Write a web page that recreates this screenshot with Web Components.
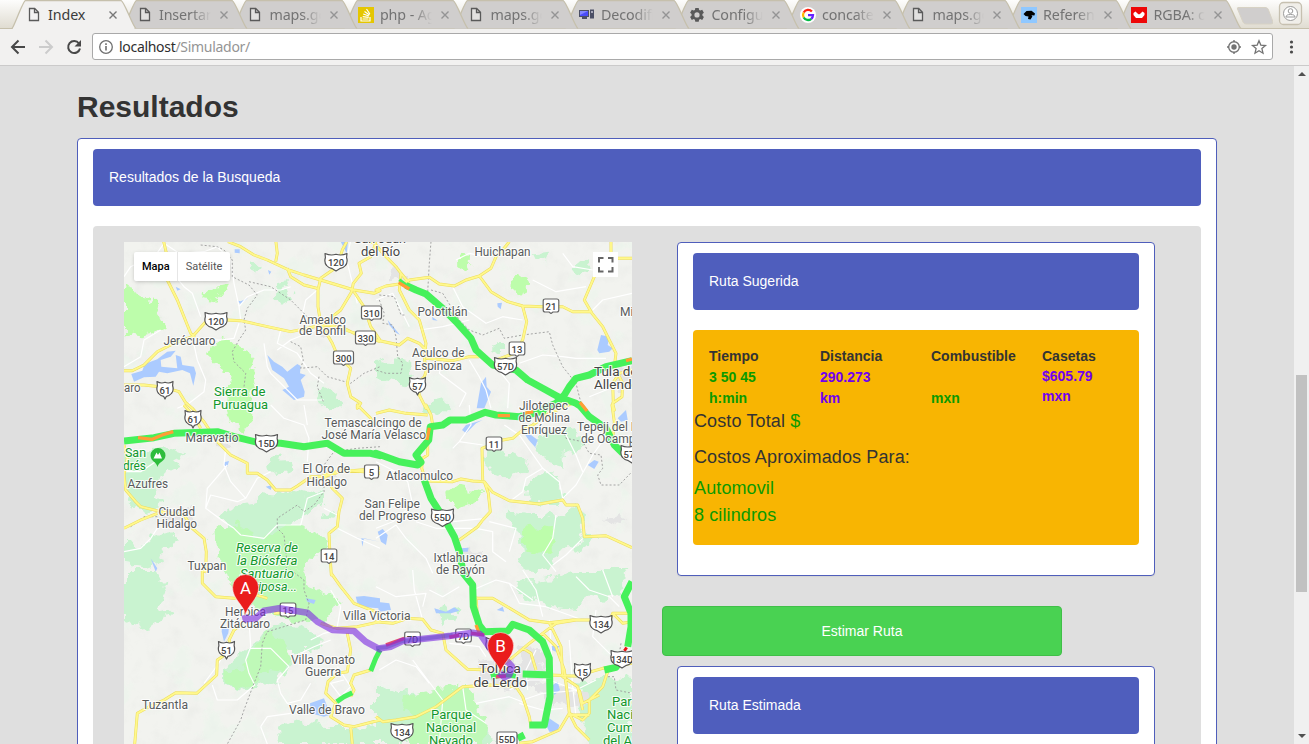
<!DOCTYPE html>
<html lang="es">
<head>
<meta charset="utf-8">
<title>Index</title>
<style>
html,body{margin:0;height:100%;overflow:hidden}
body{font-family:"Liberation Sans",Arial,sans-serif;font-size:14px;line-height:20px;color:#333;background:#dfdfdf}
</style>
</head>
<body>
<browser-window>
  <browser-tab slot="tabs" icon="page" active>Index</browser-tab>
  <browser-tab slot="tabs" icon="page">Insertar</browser-tab>
  <browser-tab slot="tabs" icon="page">maps.go</browser-tab>
  <browser-tab slot="tabs" icon="stack">php - Agr</browser-tab>
  <browser-tab slot="tabs" icon="page">maps.go</browser-tab>
  <browser-tab slot="tabs" icon="pc">Decodifi</browser-tab>
  <browser-tab slot="tabs" icon="gear">Configur</browser-tab>
  <browser-tab slot="tabs" icon="google">concaten</browser-tab>
  <browser-tab slot="tabs" icon="page">maps.go</browser-tab>
  <browser-tab slot="tabs" icon="bird">Referenc</browser-tab>
  <browser-tab slot="tabs" icon="wing">RGBA: co</browser-tab>
  <results-page></results-page>
</browser-window>

<script>
const define = (name, html, setup) => customElements.define(name, class extends HTMLElement {
  connectedCallback() {
    if (this.shadowRoot) return;
    const t = document.createElement('template');
    t.innerHTML = typeof html === 'function' ? html(this) : html;
    this.attachShadow({mode: 'open'}).appendChild(t.content.cloneNode(true));
    if (setup) setup(this, this.shadowRoot);
  }
});

/* ---------- tabs ---------- */
const ICONS = {
  page: '<path d="M3.5 1.5h5.2l3.8 3.8v8.2h-9zM8.5 1.5v4h4" fill="#f4f4f4" fill-opacity=".5" stroke="#5a5a5a" stroke-width="1.3"/>',
  stack: '<path fill="#e5c600" d="M0 0h16v16H0z"/><path d="M3 10v4h9v-4M4.5 12h6M4.7 9.6l6 .8M5.2 7l5.7 2M6.5 4.4l5 3.6M8.5 2l3.4 5" stroke="#fff" stroke-width="1.2" fill="none"/>',
  pc: '<path fill="#4b4f66" d="M0 3h10v7H0zM3 10h5v2H3zM11 2.500h4v9h-4z"/><path fill="#4a4cf8" d="M1 4h8v5H1z"/><path fill="#8286ff" d="M1 4h8L1 8z"/><path fill="#aab" d="M12 4h2v2h-2z"/>',
  gear: '<path fill="#595959" fill-rule="evenodd" d="M6.300 1h3.400l.4 2 1.200.6 1.900-.8 1.700 2.900-1.500 1.400v1.500l1.500 1.400-1.700 2.900-1.900-.8-1.200.6-.4 2H6.300l-.4-2-1.200-.6-1.900.8L1.100 10l1.500-1.400V7.100L1.100 5.700l1.700-2.900 1.900.8L5.900 3zM8 5.300a2.600 2.600 0 1 0 0 5.200 2.600 2.600 0 0 0 0-5.200z"/>',
  google: '<circle cx="8" cy="8" r="8" fill="#fff"/><g fill="none" stroke-width="2.300"><path d="M11.900 4.600A5 5 0 0 0 3.700 5.500" stroke="#f21"/><path d="M3.700 5.500a5 5 0 0 0 0 5" stroke="#fb0"/><path d="M3.700 10.500a5 5 0 0 0 7.600 1.300" stroke="#0b4"/><path d="M11.300 11.800A5 5 0 0 0 13 8.200H8" stroke="#62f"/></g>',
  bird: '<path fill="#90c8ff" d="M0 0h16v16H0z"/><path d="M2.500 7l3-3 5-.2 3.500 2.700-.6 2-3-.3 1 1.300L9.500 12.500 7 12l.5-2.500-3-.5z"/>',
  wing: '<path fill="#ee0808" d="M0 0h16v16H0z"/><path fill="#fff" d="M2.500 6l2-1.500L6.500 6.500 8 7.500l1.500-1L11.500 4.500l2 1.500v2L11 11H5L2.500 8z"/>'
};
define('browser-tab', el => `
<style>
:host{display:block;position:relative;flex:0 0 110.500px;height:29px}
.shape{position:absolute;left:0;top:0;overflow:visible}
.row{position:relative;display:flex;align-items:center;height:29px;padding-left:${el.hasAttribute('active') ? '14px' : '14.400px'};width:92px}
.icon{flex:0 0 16px}
.t{flex:0 0 53px;margin-left:6px;font:14.300px/29px "Noto Sans","Open Sans",sans-serif;letter-spacing:-.1px;color:${el.hasAttribute('active') ? '#3c3c3c' : '#737373'};overflow:hidden;white-space:nowrap;
${el.hasAttribute('active') ? '' : '-webkit-mask-image:linear-gradient(90deg,#000 62%,transparent 98%)'}}
.x{margin-left:7px;flex:0 0 10px}
</style>
<svg class="shape" width="124" height="29"><path d="M0 28.500C2 27 11 .5 13.500.5H109C112 .5 121 27 124 28.500" fill="${el.hasAttribute('active') ? '#f2f1f0' : '#d0cecd'}" stroke="#c6c0ac" stroke-width="1.300"/>${el.hasAttribute('active') ? '<path d="M1 28.500h121" stroke="#f2f1f0" stroke-width="1.500"/>' : ''}</svg>
<div class="row"><svg class="icon" width="16" height="16" viewBox="0 0 16 16">${ICONS[el.getAttribute('icon')]}</svg>
<span class="t"><slot></slot></span>
<svg class="x" width="10" height="10"><path d="M1.500 1.500l7 7m0-7l-7 7" stroke="${el.hasAttribute('active') ? '#777' : '#949494'}" stroke-width="1.400"/></svg></div>`,
el => { el.style.zIndex = 20 - [...el.parentNode.children].indexOf(el); });

/* ---------- address bar ---------- */
define('address-bar', `
<style>
:host{display:flex;align-items:center;height:36px;background:#f2f1f0;border-bottom:1px solid #cbcaca;box-sizing:content-box}
.nav{flex:0 0 92px;height:36px}
.box{flex:0 0 1179px;height:25px;border:1px solid #a9a9a9;border-radius:3px;background:#fff;display:flex;align-items:center;margin-top:-1px}
.url{font:14px/25px "Noto Sans","Open Sans",sans-serif;color:#2e2e2e;letter-spacing:-.3px;margin-left:5px;flex:1}
.url span{color:#959595}
.info{margin-left:5px}
</style>
<svg class="nav" viewBox="0 0 92 36" fill="none" stroke-width="2">
<path d="M25 18H12.500M18.500 11.500L12 18l6.500 6.500" stroke="#484848"/>
<path d="M39 18h12.500M45.500 11.500L52 18l-6.500 6.500" stroke="#ccc"/>
<path d="M79 14.500A6 6 0 1 0 80 19.500" stroke="#484848"/><path d="M81 11v6.500h-6.500z" fill="#484848"/></svg>
<div class="box"><svg class="info" width="16" height="16" fill="none" stroke="#6f6f6f"><circle cx="8" cy="8" r="6.300" stroke-width="1.300"/><path d="M8 7v4.500M8 4.300v1.600" stroke-width="1.600"/></svg>
<span class="url">localhost<span>/Simulador/</span></span>
<svg width="47" height="20" fill="none" stroke="#737373"><circle cx="9" cy="10" r="5.300" stroke-width="1.400"/><circle cx="9" cy="10" r="2.700" fill="#737373" stroke="none"/><path d="M9 3v2M9 15v2M2 10h2M14 10h2" stroke-width="1.400"/><path d="M34 3.800l1.800 4.300 4.700.4-3.600 3.100 1.100 4.600-4-2.500-4 2.500 1.100-4.600-3.600-3.100 4.700-.4z" stroke-width="1.300"/></svg></div>
<svg width="36" height="36" fill="#4a4a4a"><circle cx="18.500" cy="13" r="1.600"/><circle cx="18.500" cy="18" r="1.600"/><circle cx="18.500" cy="23" r="1.600"/></svg>`);

define('page-scrollbar', `
<style>
:host{display:flex;flex-direction:column;align-items:center;background:#f0f0f0;width:15px}
.track{flex:1;width:11px;padding-top:294px;box-sizing:border-box}
.thumb{height:217px;background:#c1c1c1}
svg{display:block}
</style>
<svg width="15" height="15"><path d="M4 10h8L8 6z" fill="#505050"/></svg>
<div class="track"><div class="thumb"></div></div>
<svg width="15" height="15"><path d="M4 5h8L8 9z" fill="#505050"/></svg>`);

define('browser-window', `
<style>
:host{display:flex;flex-direction:column;width:1309px;height:744px;overflow:hidden}
.strip{display:flex;flex:0 0 29px;height:29px;padding-left:12px;background:linear-gradient(#fdfdfc,#dfdbd0);box-shadow:inset 0 -1px #c6c0ac;position:relative;box-sizing:border-box}
.new{margin-left:8px;flex:0 0 37px}
.user{margin-left:3px}
.view{flex:1;display:flex;min-height:0}
.page{flex:0 0 1294px;height:678px;overflow:hidden}
address-bar{flex:0 0 36px}
</style>
<div class="strip"><slot name="tabs"></slot>
<svg class="new" width="37" height="29"><path d="M2 7.500h27c2 0 3 1 3.500 2.500L37 22q.5 2-2 2H10q-2 0-3-2L1.500 9q-.4-1.500.5-1.500z" fill="#d0cecd" stroke="#d7d2c4" /></svg>
<svg class="user" width="28" height="29" fill="none"><rect x="3.500" y="2.500" width="22" height="22" rx="4" fill="#f0eee9" stroke="#c6c0b0" stroke-width="1.300"/><circle cx="14.500" cy="13.500" r="7" fill="#fff" stroke="#999"/><circle cx="14.500" cy="11" r="2.300" stroke="#999"/><path d="M10 17q0-2.500 4.500-2.500t4.500 2.500z" stroke="#999"/></svg></div>
<address-bar></address-bar>
<div class="view"><div class="page"><slot></slot></div><page-scrollbar></page-scrollbar></div>`);

/* ---------- page widgets ---------- */
define('result-panel', `
<style>
:host{display:block;box-sizing:border-box;background:#fff;border:1px solid #4f5ebb;border-radius:4px;padding:10px 15px 0;box-shadow:0 1px 1px rgba(0,0,0,.05)}
</style><slot></slot>`);
define('panel-title', `
<style>
:host{display:block;box-sizing:border-box;height:57px;padding:18px 16px 19px;background:#4f5ebd;border-radius:4px;color:#fff;margin-bottom:20px}
</style><slot></slot>`);
define('trip-metric', `
<style>
:host{display:block;flex:0 0 111px;font-weight:bold}
:host([tight]){flex:0 1 97px;min-width:0}
.v,.u{height:var(--row,21px);line-height:22px;color:var(--tone,#0a9a00)}
:host([tight]) .v,:host([tight]) .u{line-height:20px}
</style><div><slot></slot></div><div class="v"><slot name="v"></slot></div><div class="u"><slot name="u"></slot></div>`);
define('cost-box', `
<style>
:host{display:block;box-sizing:border-box;height:215px;background:#f8b502;border-radius:4px;padding-top:16px}
.m{display:flex;padding-left:16px;height:65px}
.violet{--tone:#7000f0}
[tight]{--row:20px}
p{margin:0 0 0 1px;font-size:18px;line-height:20px;letter-spacing:.12px}
.g{color:#0a9a00}
</style>
<div class="m">
<trip-metric>Tiempo<span slot="v">3 50 45</span><span slot="u">h:min</span></trip-metric>
<trip-metric class="violet">Distancia<span slot="v">290.273</span><span slot="u">km</span></trip-metric>
<trip-metric>Combustible<span slot="u">mxn</span></trip-metric>
<trip-metric class="violet" tight>Casetas<span slot="v">$605.79</span><span slot="u">mxn</span></trip-metric>
</div>
<p>Costo Total <span class="g">$</span></p>
<p style="margin-top:16px">Costos Aproximados Para:</p>
<p class="g" style="margin-top:11px">Automovil</p>
<p class="g" style="margin-top:7px">8 cilindros</p>`);
define('action-button', `
<style>
:host{display:block}
button{display:block;box-sizing:border-box;width:100%;height:50px;border:1px solid #40bf48;border-radius:4px;background:#49d252;color:#fff;font:14px/20px "Liberation Sans",Arial,sans-serif;padding:0}
</style><button><slot></slot></button>`);
define('results-page', `
<style>
:host{display:block;height:678px;background:#dfdfdf;padding:24px 77px 0;box-sizing:border-box}
h1{margin:0 0 15px;font-size:30px;line-height:33px;height:33px;font-weight:bold}
.main{height:900px;width:1140px}
.well{display:flex;align-items:flex-start;height:800px;background:#dfdfdf;border-radius:4px;padding:16px 0 0 31px}
route-map{flex:0 0 508px}
.side{flex:0 0 493px;min-width:0;margin-left:30px}
.side result-panel{margin-left:15px;height:334px}
action-button{width:400px;margin:30px 0 10px}
</style>
<h1>Resultados</h1>
<result-panel class="main">
<panel-title>Resultados de la Busqueda</panel-title>
<div class="well"><route-map></route-map>
<div class="side">
<result-panel><panel-title>Ruta Sugerida</panel-title><cost-box></cost-box></result-panel>
<action-button>Estimar Ruta</action-button>
<result-panel><panel-title>Ruta Estimada</panel-title></result-panel>
</div></div>
</result-panel>`);

/* ---------- map ---------- */
/* Geometry is stored per sheet in thirds of a pixel; each sheet has its own origin. */
const SHEETS = {a:[124,240], b:[376,240], c:[124,405], d:[376,405], e:[124,570], f:[376,570]};
const pts = (s, str) => str.trim().split(/\s+/).map(p => {
  const [x, y] = p.split(',').map(Number), o = SHEETS[s];
  return (o[0] + x / 3).toFixed(1) + ' ' + (o[1] + y / 3).toFixed(1);
});
const path = rows => rows.map(r => {
  let d = [];
  for (let i = 0; i < r.length; i += 2) d = d.concat(pts(r[i], r[i + 1]));
  return 'M' + d.join('L');
}).join('');

const PARK_BRIGHT = [
 ['a','0,140 28,148 35,165 62,172 72,185 90,172 115,190 112,215 105,232 123,262 80,280 48,286 0,275'],
 ['a','252,160 270,145 305,137 300,158 280,182 248,178'],
 ['a','252,345 262,318 290,305 320,303 340,325 380,345 393,365 385,400 392,450 380,505 385,540 355,585 325,550 310,510 312,440 320,410 290,385 270,365'],
 ['b','245,55 262,42 285,45 284,78 265,88 247,75'],
 ['b','408,120 440,110 462,125 455,152 428,163 406,148'],
 ['d','220,260 235,243 270,252 318,262 312,280 285,300 250,307 222,290'],
 ['d','440,380 470,362 533,372 530,400 530,440 490,448 442,440'],
 ['c','265,370 340,355 400,400 500,360 560,380 612,400 600,430 550,470 520,505 520,560 330,560 300,480 270,430'],
 ['e','350,0 520,0 550,50 650,90 600,150 520,155 400,120 360,60'],
 ['e','430,180 500,240 480,305 430,300 380,355 310,340 305,310 360,290 380,240'],
 ['f','105,370 180,355 270,345 290,370 300,425 330,450 320,522 100,522 90,480 110,440 80,400']
];
const PARKS = [
 ['c','0,135 60,140 150,130 180,150 150,165 170,185 110,215 90,270 120,300 60,320 20,300 0,240'],
 ['c','425,190 460,150 480,148 470,170 510,168 515,185 490,205 450,208'],
 ['c','300,330 340,300 400,290 420,265 480,270 520,255 570,270 600,250 600,290 560,320 520,340 500,380 540,440 500,500 340,480 340,400 300,370'],
 ['c','610,310 640,325 630,342 600,335'],
 ['c','0,410 60,420 110,380 165,395 140,430 110,440 120,470 60,490 0,480'],
 ['b','0,370 50,355 105,370 110,410 80,440 60,430 0,420'],
 ['b','355,310 375,300 375,335 355,345'],['b','150,490 200,478 225,500 190,530 140,520'],
 ['b','600,65 640,55 640,90 615,105 595,88'],['b','470,40 530,35 520,55 480,60'],
 ['a','460,125 495,120 480,150 505,165 500,185 480,190 455,180'],
 ['a','575,450 600,440 640,470 655,505 620,505 585,490'],
 ['a','385,70 405,75 400,92 385,85'],
 ['d','320,150 380,135 430,160 458,175 445,200 400,220 350,200 330,180'],
 ['d','450,235 500,200 550,215 555,245 570,275 540,290 480,295 448,275'],
 ['d','500,90 570,60 610,90 640,120 600,135 560,150 560,185 510,170 490,130'],
 ['d','395,320 450,330 500,330 560,340 610,300 620,370 600,430 560,430 530,480 490,500 440,500 430,390 400,340'],
 ['d','620,385 670,400 640,420 600,440'],
 ['e','0,0 90,0 130,40 100,100 140,130 90,160 50,170 0,150'],
 ['e','300,300 380,230 420,180 500,165 570,190 600,210 570,240 490,240 500,290 440,340 370,360 300,340'],
 ['e','460,480 520,450 620,480 680,480 768,455 768,522 470,522'],
 ['f','0,340 60,370 110,365 120,440 80,480 90,522 0,522'],
 ['f','430,30 540,20 600,0 760,0 740,60 680,90 620,75 600,120 520,110 420,70'],
 ['f','170,125 210,105 250,130 240,155 190,155'],
 ['f','610,350 680,320 768,330 768,522 640,522 615,430'],
 ['f','280,480 320,470 350,500 360,522 270,522']
];
const WATER = [
 ['a','22,402 55,392 62,372 100,358 130,335 155,332 140,350 110,360 112,380 160,385 155,345 170,350 175,375 210,380 216,400 208,437 198,400 175,390 130,400 105,395 95,410 60,412 30,425'],
 ['a','430,345 450,365 475,380 490,395 520,372 530,378 528,400 545,405 530,420 542,455 540,470 510,480 475,450 495,440 480,415 445,390'],
 ['a','342,182 350,184 372,174 348,192'],['a','332,28 347,28 347,40 332,38'],['a','650,5 672,5 668,40'],['a','155,140 170,148 160,152'],['a','432,90 442,95 436,104'],
 ['b','35,240 72,285 60,278 40,255'],['b','664,330 675,285 700,290 695,315 710,325 700,335 670,340'],
 ['b','302,505 315,430 330,410 332,440 345,455 325,505'],['b','364,190 378,188 374,208 365,200'],['b','168,230 185,242 170,240'],
 ['d','258,75 270,60 320,45 300,55 280,75 270,85'],['d','448,90 458,105 485,135 478,125 485,105 465,90'],['d','635,180 655,165 668,170 655,192'],['d','5,380 20,372 35,390 30,420 15,410'],['d','725,40 750,15 755,45 735,50'],['d','255,430 278,428 275,440 258,440'],
 ['c','300,172 315,168 310,185 300,182'],['c','425,245 445,240 440,255'],['c','80,460 100,490 95,500'],['c','690,395 768,410 720,400 715,425 712,400'],
 ['e','294,170 315,172 313,190 300,215 293,185'],['e','695,80 720,78 768,85 768,115 720,112 700,98'],['e','545,85 575,90 570,102 550,95'],['e','558,400 600,385 610,410 630,430 600,440 560,430'],
 ['f','175,115 210,125 235,112 250,122 225,130 180,130'],['f','0,95 40,100 45,120 10,125'],['f','525,228 550,228 540,245 528,240'],['f','530,345 545,335 552,360 535,375'],['f','510,465 520,445 535,455 550,465 545,485 520,485'],['f','362,120 380,110 385,125']
];
const URBAN = [
 ['f','300,265 380,255 410,270 470,260 510,300 470,350 380,360 320,330'],['f','430,230 500,235 520,290 440,290'],['f','470,330 560,350 640,380 620,410 520,400'],
 ['c','580,195 640,205 620,230 590,225'],['c','95,315 200,315 215,360 150,365'],['b','60,80 90,100 80,130 50,120'],['c','280,110 325,110 325,130 290,128'],
 ['d','690,345 730,325 750,335 720,360 700,355'],['b','700,380 768,380 768,450 720,450'],['d','260,430 330,435 330,460 270,455'],['a','560,250 620,245 615,280 570,280']
];
const MINOR = [
 ['a','0,110 20,80 60,60 95,45 120,10'],['a','120,10 165,40 240,35 280,20'],['a','280,20 320,60 330,130 345,200 350,240'],['a','155,110 180,140 205,160 230,230'],
 ['a','345,200 370,170 420,150 470,150 500,140'],['a','205,290 220,360 245,420 240,455 195,490 160,505'],['a','345,250 330,295 290,300 215,300'],['a','0,380 50,350 60,300 110,270'],
 ['a','420,310 430,380 440,400 480,440 520,480 600,480'],['a','460,330 500,300 600,260'],['a','470,270 460,310 520,340 560,400 600,430'],
 ['a','680,0 668,60 690,150 700,190'],['a','530,250 545,180 580,150'],['b','230,140 260,200 330,250 380,230 440,240'],['b','130,270 200,260 280,240'],['b','470,120 540,155 630,140'],
 ['b','200,360 190,400 270,460 250,500'],['b','280,360 310,410 330,450 345,505'],['b','430,370 500,345 560,350 600,355 690,355'],['b','360,380 400,430 395,505'],['b','560,40 590,80 650,90'],['b','650,210 680,180 768,160'],
 ['b','0,180 50,160 75,210 100,260'],['b','640,470 690,450 720,420'],['b','330,50 280,40 240,60'],
 ['c','305,130 300,180 320,230 365,280 340,290 260,270 245,310 300,350 330,370 350,390'],['c','365,280 400,220 440,200'],['c','440,0 480,40 540,60 555,100 550,170'],
 ['c','540,0 550,60'],['c','350,390 420,400 460,360 530,360 550,280 600,260'],['c','640,370 700,400 768,430'],['c','0,200 50,200 110,160'],
 ['c','0,440 50,430 80,400 100,370'],['c','245,310 250,250 310,180'],['c','600,310 640,330'],
 ['d','0,170 60,200 95,230 110,300 50,350 0,370'],['d','0,400 60,360 90,400 150,460 170,505'],['d','120,350 180,370 300,370 350,380 350,440 390,470'],['d','385,60 430,90 500,190 550,230 560,280'],['d','500,190 450,220 440,260 400,290'],
 ['d','280,0 285,60 250,110 230,130'],['d','230,350 330,340'],['d','540,330 530,400 500,450 540,500'],['d','560,280 600,240 650,150 700,80'],['d','0,290 50,290'],['d','250,110 320,120'],['d','560,70 600,150 620,200'],
 ['d','340,350 420,370 400,440'],['d','620,400 570,450 530,480'],
 ['e','375,150 380,230 365,270 375,310 392,345 340,390 280,390 265,345'],['e','380,235 440,235 495,290 460,330 470,370 490,400 530,390 560,340'],['e','410,470 430,440 500,430'],['e','560,210 600,190 640,180'],
 ['e','620,60 650,110 640,170'],['e','620,210 570,230 530,250'],['e','640,290 680,350 650,380 620,340 660,330'],['e','240,340 270,300 290,270'],['e','410,470 430,522'],
 ['f','0,50 60,80 150,70 140,110'],['f','10,300 60,270 120,290 160,340'],['f','110,0 115,60 140,150'],['f','110,270 200,390 190,522'],['f','250,50 200,80 160,60'],['f','290,60 360,30 400,40 470,90'],
 ['f','440,0 480,60 500,140'],['f','400,40 430,100 510,110 620,150'],['f','330,260 310,230 220,220'],['f','400,360 460,330 520,330 600,360 660,330'],['f','440,390 500,370 620,360'],['f','520,150 530,300'],
 ['f','580,210 590,350 600,440'],['f','430,400 500,420 560,415'],['f','260,350 270,420 330,460'],['f','600,20 640,60 700,80 730,110'],['f','680,0 710,80'],['f','660,120 650,200 710,260 768,250'],['f','480,240 450,300 455,360'],['f','300,400 400,380 450,400']
];
const YELLOW = [
 ['a','118,0 132,60 130,120 160,180 190,255 200,280 212,292'],
 ['a','0,392 25,392 60,375 100,335 150,310 205,290 245,245 265,240 310,240 350,242 440,262 500,275 550,265 580,258 620,255 768,305'],
 ['a','0,435 60,435 120,442 165,455 185,488 205,505','c','205,10 240,50 280,110 320,150 370,175 370,205 400,205 430,225 455,255 500,255 520,243 560,215 600,215 650,200 768,190'],
 ['a','312,5 350,20 390,45 430,60 490,88 540,105 590,120 640,135 690,150 750,160 768,152','b','0,150 30,138 70,132 100,120 160,112 190,132 235,138 270,120 310,108 345,85 360,50 380,30 400,5'],
 ['a','455,0 460,40 455,65'],['a','490,85 500,110 540,135 580,145'],
 ['a','730,5 755,10 740,50 705,70 712,100 688,130 683,155 650,210 600,250'],['a','668,5 655,30 640,80 590,115 582,150 582,200 590,250 625,310 640,345 680,385 670,430 680,470 710,490 700,505','c','700,0 740,40 750,60'],
 ['a','690,155 720,200 740,260 768,300'],['a','610,255 660,265 700,285'],
 ['b','0,15 25,45 60,80 75,100 70,150 100,210 130,240 150,310 145,350 150,395 145,410 125,430 130,465 150,505','d','150,0 165,30 170,60 155,100 155,150 140,160 137,190 150,228 230,230 255,222 290,228 325,230 350,262 400,287 490,297 560,285 570,300 605,300 620,340 625,395 690,392 768,428'],
 ['b','75,100 100,130'],['b','310,108 345,155 395,185 440,198 500,200 560,200 590,215 645,215'],['b','440,200 452,245 440,300 415,340 360,360'],
 ['b','768,55 700,55 655,110 625,180 648,220 680,260 700,300 720,340 715,380 740,430 738,470 710,490 715,510','d','708,0 715,50 710,100'],
 ['b','705,5 705,50'],['b','0,300 70,315 95,295 130,310 150,330'],['b','150,355 230,362 280,350 310,350'],
 ['b','768,390 730,400 710,430 712,490'],
 ['d','600,-10 520,25 470,60 440,75 410,100 380,105 318,130 320,225'],['d','325,230 337,265 343,320 320,345 305,365 250,405'],
 ['d','0,25 40,15 90,25 155,30'],['c','768,205 720,200 660,195 600,210 625,250 655,280 645,320 640,365 615,385 618,450 622,510','e','622,10 650,50 690,100 768,130'],
 ['c','0,120 10,160 0,210 5,255 35,290 50,305 110,320'],['c','0,370 50,345 100,325'],['c','110,320 180,330 205,370 240,400 247,440 245,500','e','235,0 235,40 275,80 330,85 380,70 430,85'],
 ['c','180,0 210,35 230,70'],
 ['e','355,160 330,180 315,210 325,240 280,270 278,315 240,350 218,370 155,368 120,390 75,410 40,430 32,522'],
 ['e','670,190 680,240 670,305 640,310 612,335 605,370 635,400 620,440 660,465 690,470 768,450'],['e','450,130 470,128'],
 ['e','740,300 690,315 680,340 690,360 680,380'],['e','680,470 685,522'],['e','590,160 640,175 700,170 768,155','f','0,155 50,160 95,145 140,148 165,180 200,190 210,240 275,298 340,300'],
 ['f','300,85 350,85 410,120 460,150 520,158 590,150 650,150 700,155 710,130 768,130'],['f','300,80 305,150'],
 ['f','640,150 600,150 540,160 500,190 460,220 400,270 360,300'],['f','440,235 465,250 480,300'],['f','0,440 20,455 60,450 120,440 180,410 260,350 340,345 420,350 440,380 460,440 465,470'],
 ['f','520,315 600,318 680,295 768,280'],['f','500,190 540,230 565,300 575,380 580,430 550,480 470,515 430,520'],['f','700,290 680,350 640,390 640,430 620,450 580,430'],['f','575,435 640,435'],['f','580,430 600,470 640,510'],['f','610,360 620,400 670,375'],['f','520,158 555,230 560,320 605,350 620,420'],['f','710,130 740,160 768,155']
];
const BORDER = [
 ['a','230,15 280,20 300,30 325,60 325,110 375,135 400,165 370,205 360,240 365,270 345,300 325,335 330,365 365,400 360,440'],['a','375,125 440,140 500,180 550,230'],['a','500,305 530,320 538,360 530,385 580,380 610,410 680,430 720,400 768,380'],['a','585,410 580,440 600,490'],
 ['b','165,5 160,70 155,155'],['b','10,180 25,220 20,250 50,255 60,290 65,350 80,370 75,400 30,400 0,390'],['b','10,165 55,170 75,225 90,225'],['b','165,150 200,160 250,240 280,270 320,285 370,265 385,295 440,285 520,275 530,315 560,380 600,430 615,490'],
 ['d','560,75 570,100 620,110 640,145 675,150 680,190 665,210 675,240 730,240 768,200'],
 ['c','768,125 700,130 630,140 600,180 600,260 570,300 540,320 520,300 460,340 460,370 480,390 490,480 480,505'],
 ['e','500,0 540,30 540,60 555,100 545,150 430,185 415,220 410,290 390,340 360,420 350,450 310,522'],['e','100,-160 60,-160 20,-130'],
 ['f','690,290 690,320 715,320 720,360 768,370'],['f','735,220 730,250']
];
const TRAFFIC = [
 ['b','90,136 120,150 150,162 200,205 240,245 285,295 300,330 350,375 420,390 455,420 500,445 550,472 600,490 615,500'],
 ['b','768,362 690,380 640,405 600,415 580,440 565,465 540,490 505,505','d','500,20 430,35 360,30 328,22 270,45 222,45 200,60 163,65 158,105 120,150 135,172 125,180 70,170 0,145','c','768,152 740,145 660,145 610,115 540,125 470,115 400,112 330,95 280,80 150,85 90,98 0,108'],
 ['d','605,-5 640,35 690,70 715,120 740,145'],
 ['d','145,225 165,280 210,350 235,395 250,440 262,505','f','262,10 290,45 292,110 310,165 325,185 395,183 410,163 460,180 500,215 520,265 522,380 505,465 460,465'],
 ['f','440,312 530,315'],['f','768,35 745,80 765,130 765,170 755,230'],['f','685,300 720,292 735,270'],['f','345,320 380,310 420,315'],['f','445,495 425,505']
];
const L = (x1, x2, y, t, c = '') => `<text x="${x1}" y="${y}" textLength="${x2 - x1}" lengthAdjust="spacingAndGlyphs" class="${c}">${t}</text>`;
const T = (x, y, t, c = '') => `<text x="${x}" y="${y}" class="${c}">${t}</text>`;
const crest = (x, y, t) => { const w = t.length < 3 ? 8 : 11;
  return `<g transform="translate(${x} ${y})"><path d="M${-w} -8.500q${w * .5} 2.500 ${w} .8q${w * .5} 1.700 ${w} -.8l-.4 4q1.500 5-1.200 8q-2 2.500-5 2.800l${-(w - 6.600)} 2.700l${-(w - 6.600)} -2.700q-3-.3-5-2.800q-2.700-3-1.200-8z" fill="#fff" stroke="#555" stroke-width="1.200"/><text y="3.600" class="n">${t}</text></g>`; };
const sign = (x, y, t) => { const w = t.length === 1 ? 7 : t.length === 2 ? 7.800 : 10;
  return `<g transform="translate(${x} ${y})"><path d="M${-w + 2} -7h${2 * w - 4}q2 0 2 2v9q0 2-2 2h${-(w - 4)}l-2 1.500-2-1.500h${-(w - 4)}q-2 0-2-2v-9q0-2 2-2z" fill="#fff" stroke="#666" stroke-width="1.200"/><text y="3.600" class="n">${t}</text></g>`; };
const pin = (x, y, t) => `<g transform="translate(${x} ${y})"><path d="M0 0C-1-10-13-16-13-28a13 13 0 0 1 26 0C13-16 1-10 0 0z" fill="#ea1c1c" stroke="#fff" stroke-opacity=".7" stroke-width=".7"/><text y="-21.500" class="pin">${t}</text></g>`;

define('map-controls', `
<style>
:host{position:absolute;left:10px;top:10px;right:14px;display:flex;justify-content:space-between;align-items:flex-start;font:11px/29px Roboto,sans-serif}
.types{display:flex;background:#fff;border-radius:2px;box-shadow:0 1px 4px -1px rgba(0,0,0,.3)}
.types span{padding:0 8px;height:29px;color:#565656}
.types .on{color:#000;font-weight:500;border-right:1px solid #e6e6e6;padding-right:7px}
.full{width:25px;height:25px;background:#fff}
</style>
<div class="types"><span class="on">Mapa</span><span>Satélite</span></div>
<svg class="full" viewBox="0 0 25 25" fill="none" stroke="#666" stroke-width="2"><path d="M6 10.500V6h4.500M15 6h4.500v4.500M19.500 15v4.500H15M10.500 19.500H6V15"/></svg>`);

define('route-map', () => `
<style>
:host{display:block;position:relative;height:784px;overflow:hidden}
svg.map{display:block}
text{font:12px Roboto,sans-serif;fill:#585b5b;stroke:#fff;stroke-width:2.200px;stroke-opacity:.85;paint-order:stroke;stroke-linejoin:round}
.big{font-size:13.500px;fill:#454545}
.park{font-size:13px;fill:#12982c}
.it{font-style:italic}
.n{font-size:9.500px;font-weight:500;text-anchor:middle;stroke:none;fill:#444}
.pin{font:17px Roboto,sans-serif;text-anchor:middle;stroke:none;fill:#fff}
</style>
<svg class="map" width="508" height="784" viewBox="124 242 508 784" fill="none" stroke-linejoin="round">
<defs>
<filter id="rough" x="0" y="0" width="1" height="1"><feTurbulence type="fractalNoise" baseFrequency=".09" numOctaves="3" seed="4"/><feDisplacementMap in="SourceGraphic" scale="16" xChannelSelector="R" yChannelSelector="G"/></filter>
<filter id="speck" x="0" y="0" width="1" height="1"><feTurbulence type="fractalNoise" baseFrequency=".035" numOctaves="4" seed="11"/><feColorMatrix values="0 0 0 0 .79  0 0 0 0 .95  0 0 0 0 .82  0 9 0 0 -5.400"/></filter>
<filter id="relief" x="0" y="0" width="1" height="1"><feTurbulence type="fractalNoise" baseFrequency=".06" numOctaves="4" seed="7"/><feColorMatrix values="0 0 0 0 .6  0 0 0 0 .62  0 0 0 0 .6  0 0 1.500 0 -.72"/></filter>
</defs>
<rect x="124" y="242" width="508" height="784" fill="#f2f3ef"/>
<rect x="124" y="242" width="508" height="784" filter="url(#relief)" opacity=".22"/>
<rect x="124" y="242" width="508" height="784" filter="url(#speck)" opacity=".3"/>
<g filter="url(#rough)"><rect x="124" y="242" width="508" height="784" fill="#fff" fill-opacity="0"/>
<path d="${path(PARKS)}" fill="#c9f3d0"/><path d="${path(PARK_BRIGHT.slice(0, 7))}" fill="#bdfdab"/><path d="${path(PARK_BRIGHT.slice(7))}" fill="#bff9b8"/><path d="${path(URBAN)}" fill="#e4e4e4"/></g>
<path d="${path(WATER)}" fill="#abcbff"/>
<path d="${path(MINOR)}" stroke="#fff" stroke-width="1.200"/>
<path d="${path(BORDER)}" stroke="#9b9b9b" stroke-width=".9" stroke-dasharray="2 2"/>
<path d="${path(YELLOW)}" stroke="#ecdc5c" stroke-width="2.900"/>
<path d="${path(YELLOW)}" stroke="#fff88c" stroke-width="1.900"/>
<path d="${path([['b','70,119 100,142']])}" stroke="#46f15b" stroke-width="3"/>
<path d="${path(TRAFFIC)}" stroke="#46f15b" stroke-width="7"/>
<path d="${path([['e','768,240 755,265 740,303'],['e','638,395 660,380 685,368']])}" stroke="#46f15b" stroke-width="5"/>
<path d="${path([['b','68,128 100,147'],['c','42,98 85,103 120,88 148,80'],['d','160,68 153,105'],['d','365,32 402,32'],['d','445,25 472,20'],['d','612,-8 633,18'],['b','750,362 768,357'],['f','300,165 310,190']])}" stroke="#ff9d35" stroke-width="3.300"/>
<path d="${path([['f','745,235 752,240']])}" stroke="#e11" stroke-width="4"/>
<g>
${L(354,406,243,'San Juan','big')}${L(361,400,255.500,'del Río','big')}${L(474.500,530.500,255.500,'Huichapan')}${L(163.500,215.500,344.500,'Jerécuaro')}
${L(299.500,346,323.500,'Amealco')}${L(299,346,335,'de Bonfil')}${L(417.500,467.500,315.500,'Polotitlán')}${L(412,464.500,357,'Aculco de')}${L(414.500,462,369.500,'Espinoza')}
${T(620,315.500,'Mixquiahuala')}${T(594,375.500,'Tula de','big')}${T(594,388.500,'Allende','big')}${L(124,140.500,392,'aro')}
${L(214,265.500,395.500,'Sierra de','park')}${L(213,268,408.500,'Puruagua','park')}${L(185.500,238.500,442,'Maravatio')}
${L(125,146,457,'San','park')}${L(123,146,469.500,'drés','park')}${L(127.500,168,487.500,'Azufres')}${L(158.500,195,515.500,'Ciudad')}${L(156.500,197,527.500,'Hidalgo')}${L(187.500,226.500,569.500,'Tuxpan')}
${L(236,298,551.500,'Reserva de','park it')}${L(237,297.500,564.500,'la Biósfera','park it')}${L(240,294,577.500,'Santuario','park it')}${L(237,297,591,'Mariposa...','park it')}
${L(302.500,350,473,'El Oro de')}${L(306.500,347,485.500,'Hidalgo')}${L(324.500,421.500,427,'Temascalcingo de')}${L(321.500,426,439,'José María Velasco')}
${L(386,453,480,'Atlacomulco')}${L(364.500,420,507.500,'San Felipe')}${L(359,426,519.500,'del Progreso')}
${L(519,568,409.500,'Jilotepec')}${L(518.500,570,421.500,'de Molina')}${L(521,567,433.500,'Enríquez')}${T(577,430.500,'Tepeji del Río')}${T(581,442.500,'de Ocampo')}
${L(433.500,488,562,'Ixtlahuaca')}${L(436,485,574,'de Rayón')}${L(225,266,615.500,'Heroica')}${L(220,270,627.500,'Zitácuaro')}
${L(343,410.500,619.500,'Villa Victoria')}${L(291,355,663.500,'Villa Donato')}${L(305,341,675.500,'Guerra')}${L(289,365,713.500,'Valle de Bravo')}${L(142,188,708.500,'Tuzantla')}
${L(479,521,673,'Toluca','big')}${L(473.500,527,687,'de Lerdo','big')}
${L(431,472,718.500,'Parque','park')}${L(426,476,731.500,'Nacional','park')}${L(429,473,744.500,'Nevado','park')}
${T(612,705.500,'Parque','park')}${T(607,718.500,'Nacional','park')}${T(607,731.500,'Cumbres','park')}${T(603,744.500,'del Ajusco','park')}
</g>
${crest(336,262,'120')}${crest(216,321,'120')}${crest(165,390,'61')}${crest(505.500,366,'57D')}${crest(417.500,386,'57')}${crest(193,419,'61')}${crest(266.500,443,'15D')}${crest(442.500,517.500,'55D')}${crest(226.500,650,'51')}${crest(601,624,'134')}${crest(622,659,'134D')}${crest(582.500,672,'15')}${crest(402,732,'134')}${crest(632,454,'57D')}${crest(494,646,'')}
${sign(371.500,313,'310')}${sign(365.500,338,'330')}${sign(343.500,358,'300')}${sign(551,306,'21')}${sign(517,349,'13')}${sign(371.500,472,'5')}${sign(494,444,'11')}${sign(329,556,'14')}${sign(288,610,'15')}${sign(412.500,639,'7D')}${sign(463.500,636,'7D')}${sign(507,739,'55D')}
<path d="M157.500 467c-1-5-7-6-7-11.500a7.500 7.500 0 0 1 15 0C165.500 461 158.500 462 157.500 467z" fill="#2dbd3c"/><path d="M153.500 458.500l3-6 1.500 2.500 1.500-2.500 2.500 6z" fill="#fff"/>
<path d="${path([['f','0,235 30,232 80,213 130,208 230,195']])}" stroke="#286a9a" stroke-opacity=".45" stroke-width="4"/>
<path d="${path([['f','30,225 85,205'],['f','220,202 250,195'],['f','285,190 325,195'],['f','360,320 390,318']])}" stroke="#e34b72" stroke-width="3.500"/>
<path d="${path([['e','362,135 365,148 395,145 420,122 465,115 550,128 580,155 625,180 690,183 725,215 768,238','f','12,235 45,230 80,213 130,208 225,197 290,188 312,192 335,225 365,270 395,275 408,290 400,315 385,322 370,308']])}" stroke="#7d2be0" stroke-opacity=".62" stroke-width="6.500"/>
${pin(245.600,615.500,'A')}${pin(500.600,673.500,'B')}
</svg>
<map-controls></map-controls>`);
</script>
</body>
</html>
